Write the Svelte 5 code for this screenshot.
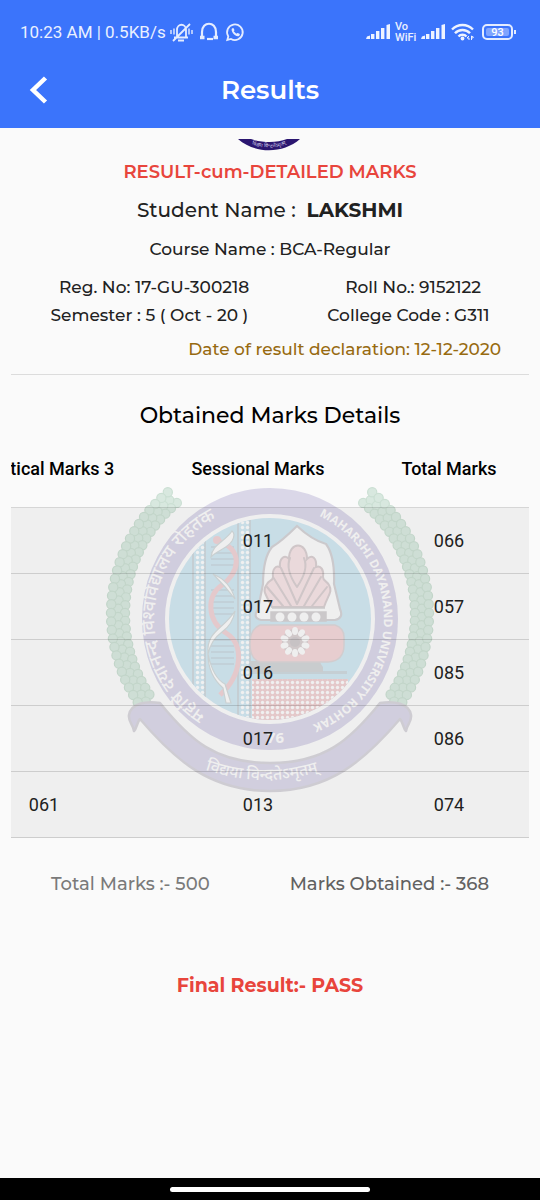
<script>
  const columns = ['Practical Marks 3', 'Sessional Marks', 'Total Marks'];
  const rows = [
    ['', '011', '066'],
    ['', '017', '057'],
    ['', '016', '085'],
    ['', '017', '086'],
    ['061', '013', '074'],
  ];

  const grains = [];
  for (let i = 0; i < 28; i++) {
    for (let k = 0; k < 3; k++) {
      const a = ((130 + i * 3.1 + (k % 2) * 1.5) * Math.PI) / 180;
      const r = 145 + k * 7;
      grains.push({ x: 270 + r * Math.cos(a), y: 614 - r * Math.sin(a) });
    }
  }
  const petals = Array.from({ length: 10 }, (_, i) => i * 36);
  const rungs = [547, 553, 559, 565, 590, 596, 602, 608, 614, 640, 646, 652, 658, 664];
</script>

<div class="page">
  <header>
    <div class="status">
      <span class="clock">10:23 AM | 0.5KB/s</span>
      <svg class="notices" viewBox="170 20 76 24" fill="none" stroke="#e4ecff" stroke-width="1.8" aria-hidden="true">
        <path d="M174 37.500h14M177 37v-7c0-7 9-7 9 0v7M173 41L190 24M178 40.500h6" />
        <path d="M171 30v4M174 28.500v6M189 28.500v6M192 30v4" stroke-width="1.400" />
        <path d="M202 37v-5c0-11 14-11 14 0v5" stroke-width="2.200" />
        <path d="M200 37.500h4.500M213.500 37.500h4.500" stroke-width="3.600" />
        <path d="M207 39h6" stroke-width="2.200" />
        <path d="M227.300 39.900l1-3.500a7.800 7.800 0 1 1 2.700 2.600z" />
        <path d="M232.200 28.200c-2.300 1.700 2.500 8.800 6.300 8 1.700-.5 1.800-2 .5-2.600l-1.700-.7-1 .9-2.600-2.600.8-1-.8-2z" fill="#e4ecff" stroke="none" />
      </svg>
      <svg class="signal" viewBox="0 0 25 16" fill="#eef3ff" aria-hidden="true">
        <path d="M1 12.500l3-1V15H0zM5 10h3.400v5H5zM10 7h3.400v8H10zM15 4h3.400v11H15zM20.500 1l3.500-1v15h-3.500z" />
      </svg>
      <span class="vo"><span>Vo</span><span>WiFi</span></span>
      <svg class="signal" viewBox="0 0 25 16" fill="#eef3ff" aria-hidden="true">
        <path d="M1 12.500l3-1V15H0zM5 10h3.400v5H5zM10 7h3.400v8H10zM15 4h3.400v11H15zM20.500 1l3.500-1v15h-3.500z" />
      </svg>
      <svg class="wifi" viewBox="0 0 24 18" fill="none" stroke="#eef3ff" stroke-width="2.400" aria-hidden="true">
        <path d="M1 6.500C7 .5 16 .5 22 6.500M4 10.300c4-4.500 11-4.500 15 0M7.500 13.500c2-2.300 6-2.300 8 0" />
        <circle cx="11.500" cy="15.500" r="1.900" fill="#eef3ff" stroke="none" />
        <path d="M18 13l-2 2h2v2M20.500 17v-4l2 1.300-2 1.200" stroke-width="1" />
      </svg>
      <span class="battery"><b>93</b></span>
    </div>
    <div class="appbar">
      <button aria-label="Back">
        <svg viewBox="0 0 20 30" fill="none" stroke="#fff" stroke-width="4.500" aria-hidden="true"><path d="M17.500 3L5 15l12.500 12" /></svg>
      </button>
      <h1>Results</h1>
    </div>
  </header>

  <main>
    <svg class="crest" viewBox="0 0 64 12" aria-hidden="true">
      <path d="M0 0C17 15 45 15 62 0H49C39 4 25 4 13 0z" fill="#2b1670" />
      <path id="crest-line" d="M9 3.500Q31 13.500 53 3.500" fill="none" />
      <text font-size="5" fill="#d4cfe8" text-anchor="middle"><textPath href="#crest-line" startOffset="50%">विद्यया विन्दतेऽमृतम्</textPath></text>
    </svg>
    <h2 class="doc">RESULT-cum-DETAILED MARKS</h2>
    <p class="student">Student Name : &nbsp;<b>LAKSHMI</b></p>
    <p class="course">Course Name : BCA-Regular</p>
    <div class="pair"><span>Reg. No: 17-GU-300218</span><span>Roll No.: 9152122</span></div>
    <div class="pair second"><span>Semester : 5 ( Oct - 20 )</span><span>College Code : G311</span></div>
    <p class="date">Date of result declaration: 12-12-2020</p>
    <hr />
    <h2 class="details">Obtained Marks Details</h2>

    <section>
      <svg class="emblem" viewBox="104 484 332 312" aria-hidden="true">
        <defs>
          <clipPath id="disc"><circle cx="270" cy="619" r="101" /></clipPath>
          <pattern id="dots" width="5" height="5" patternUnits="userSpaceOnUse"><circle cx="2.500" cy="2.500" r="1.700" fill="#fbfbfb" /></pattern>
          <path id="hindi" d="M206 714A113 113 0 0 1 242 509" />
          <path id="english" d="M319 516A114 114 0 0 1 306 727" />
          <path id="motto" d="M196 766Q270 796 344 762" />
          <g id="laurel">
            {#each grains as g}<circle cx={g.x} cy={g.y} r="4.600" />{/each}
          </g>
        </defs>
        <g fill="#d8e8df" stroke="#cbdfd3" stroke-width="1.200">
          <use href="#laurel" />
          <use href="#laurel" transform="matrix(-1 0 0 1 540 0)" />
        </g>
        <path d="M134 731c-1-7-6-9-5-16 2-12 17-14 31-12C190 740 215 763 270 763S350 740 380 703c14-2 29 0 31 12 1 7-4 9-5 16-3-3-3-9-6-12C365 760 330 791 270 791S175 760 140 719c-3 3-3 9-6 12z" fill="#dbd8e8" stroke="#d8d6dc" stroke-width="2.500" stroke-linejoin="round" />
        <ellipse cx="270" cy="619" rx="128" ry="131" fill="#dad7e8" />
        <circle cx="270" cy="619" r="105" fill="#fafafa" />
        <circle cx="270" cy="619" r="101" fill="#d2e7f1" />
        <g clip-path="url(#disc)">
          <path d="M193 510h12v220h-12zM238 510h12v220h-12z" fill="#d2e7f1" stroke="#ced8dd" stroke-width="2" />
          <path d="M195 510h10v220h-10zM240 510h10v220h-10z" fill="url(#dots)" />
          {#each rungs as y}<path d="M211 {y}h23" stroke="#c8d7de" stroke-width="1.500" />{/each}
          <path d="M216 540c30 10 22 34 6 45s-15 36 4 48 16 42-6 62" fill="none" stroke="#efd3d6" stroke-width="5" />
          <circle cx="217" cy="540" r="4" fill="#efd3d6" />
          <path d="M232 531q4 3 0 10c-5 8-15 9-21 16 1-13 14-15 21-26zM213 574q17 7 22 25-10-13-22-25zM235 611q-2 13-13 21t-14 22c-2-23 15-24 27-43zM208 654q5 24 17 30l6 19h-5l-3-15q-15-13-15-34z" fill="#fafafa" stroke="#d3dadb" stroke-width="1.200" />
          <path d="M250 671h97v3h-97z" fill="#ced9de" />
          <path d="M250 661h70q0 2 3 6v5h-73z" fill="#d3d6d8" />
          <path d="M252 679h96v50h-96z" fill="#efd1d3" />
          <path d="M252 679h96v50h-96z" fill="url(#dots)" />
        </g>
        <path d="M260 625h75q9 3 9 12v8q0 16-16 17h-68q-10-3-10-18t10-19z" fill="#f2d7d9" stroke="#dcd6d8" stroke-width="1.500" />
        <path d="M297 526Q282 541 272 547 263 558 263 584l-5 25q-6 9 3 11h74q9-2 5-11l-6-25q1-28-8-40-14-4-29-18z" fill="#fafafa" stroke="#d5d3d6" stroke-width="2.200" />
        <g fill="#f5e3e5" stroke="#d9cfd1" stroke-width="2" stroke-linecap="round">
          <path d="M272 607c-7-14-10-16-5-23 2-4 6-3 6-7-1-8 3-12 7-10-1-9 5-13 9-8 0-18 18-18 18 0 5-5 10-1 9 8 5-2 8 3 7 10 0 4 4 4 6 8 4 7-1 10-5 22z" />
          <path d="M297 587c-9-13-10-22-7-29M297 587c9-13 10-22 7-29M291 606l-18-29M304 606l17-29M283 606l-16-19M312 606l15-19M297 604l-16-36M297 604l17-36" fill="none" />
        </g>
        <path d="M272 608h53M271 612h55v9h-55z" fill="#d5d2d4" stroke="#d5d2d4" stroke-width="1.500" />
        <g fill="#fafafa"><circle cx="280" cy="617" r="4.500" /><circle cx="292" cy="617" r="4.500" /><circle cx="304" cy="617" r="4.500" /><circle cx="316" cy="617" r="4.500" /></g>
        <g transform="translate(295 642)">
          <circle r="13" fill="#dad1d3" /><circle r="5" fill="#d0cbcd" />
          {#each petals as p}<ellipse cx="0" cy="-11" rx="3" ry="4" fill="#fafafa" transform="rotate({p})" />{/each}
        </g>
        <g fill="#fafafa" class="ring">
          <text font-size="18"><textPath href="#hindi">महर्षि दयानन्द विश्वविद्यालय रोहतक</textPath></text>
          <text font-size="12" font-weight="700"><textPath href="#english">MAHARSHI DAYANAND UNIVERSITY ROHTAK</textPath></text>
          <text x="284" y="743" font-size="15" font-weight="700" text-anchor="end">76</text>
          <text font-size="16"><textPath href="#motto" startOffset="10">विद्यया विन्दतेऽमृतम्</textPath></text>
        </g>
      </svg>
      <table>
        <thead>
          <tr>{#each columns as c}<th scope="col">{c}</th>{/each}</tr>
        </thead>
        <tbody>
          {#each rows as row}
            <tr>{#each row as cell}<td>{cell}</td>{/each}</tr>
          {/each}
        </tbody>
      </table>
    </section>

    <div class="pair totals"><span>Total Marks :- 500</span><span class="got">Marks Obtained :- 368</span></div>
    <p class="final">Final Result:- PASS</p>
  </main>
  <footer><i></i></footer>
</div>

<style>
  :global(body) { margin: 0; background: #fafafa; }
  .page { min-height: 100vh; display: flex; flex-direction: column; background: #fafafa; color: #212121; font-family: Montserrat, Inter, sans-serif; }
  h1, h2, p { margin: 0; font-weight: 500; }
  svg { display: block; flex: none; }
  header { background: #3b74fb; color: #fff; }
  .status { display: flex; align-items: center; height: 52px; padding: 12px 27px 0 20px; box-sizing: border-box; font-family: Roboto, sans-serif; color: #eaf0ff; }
  .clock { font-size: 17px; white-space: nowrap; }
  .notices { width: 76px; height: 24px; margin: 0 auto 0 4px; }
  .signal { width: 25px; height: 16px; }
  .vo { display: flex; flex-direction: column; font-size: 11px; line-height: 11px; font-weight: 500; width: 22px; margin: 0 4px; }
  .wifi { width: 24px; height: 18px; margin: 0 7px 0 5px; }
  .battery { position: relative; box-sizing: border-box; width: 31px; height: 16px; padding: 2px; border: 2px solid #e4ecff; border-radius: 5px; display: flex; }
  .battery b { flex: 1; background: #7fa4ff; border-radius: 2px; font-size: 11px; line-height: 9px; text-align: center; color: #fff; font-weight: 500; }
  .battery::after { content: ''; position: absolute; right: -5px; top: 4px; width: 2px; height: 4px; background: #e4ecff; }
  .appbar { display: grid; grid-template-columns: 60px 1fr 60px; align-items: center; height: 76px; }
  button { border: 0; background: none; padding: 0 0 0 28px; height: 48px; }
  button svg { width: 20px; height: 30px; }
  h1 { text-align: center; font-size: 26px; line-height: 32px; font-weight: 600; }
  main { flex: 1; padding: 11px 11px 0; }
  .crest { width: 64px; height: 12px; margin: 0 auto; }
  main h2, main p { text-align: center; }
  .doc { margin-top: 9px; font-size: 18px; line-height: 24px; font-weight: 600; color: #e8453c; }
  .student { margin-top: 12px; font-size: 20px; line-height: 28px; }
  .course { margin-top: 13px; font-size: 17px; line-height: 24px; }
  .pair { display: flex; justify-content: space-around; margin-top: 14px; font-size: 17px; line-height: 24px; font-weight: 500; }
  .second { margin-top: 4px; }
  main .date { margin-top: 10px; padding-right: 28px; text-align: right; font-size: 17px; line-height: 24px; color: #976a10; }
  hr { margin: 13px 0 0; border: 0; border-top: 1px solid #dcdcdc; }
  .details { margin-top: 27px; font-size: 22px; line-height: 28px; color: #000; }
  section { position: relative; overflow: hidden; }
  .emblem { position: absolute; top: 54px; left: 50%; width: 332px; height: 312px; transform: translateX(-50%); }
  .ring { font-family: "Noto Sans", sans-serif; font-weight: 500; }
  table { position: relative; width: calc(100% + 82px); margin-left: -76px; table-layout: fixed; border-collapse: collapse; font-family: Roboto, sans-serif; }
  th { height: 77px; padding: 0; border-bottom: 1px solid #00000024; font-size: 18px; font-weight: 500; color: #000; width: 35%; }
  th:first-child { width: 36.33%; }
  th:last-child { width: 28.67%; }
  td { height: 65px; padding: 0; border-bottom: 1px solid #00000024; text-align: center; font-size: 18px; background: #0000000b; }
  .totals { margin-top: 34px; font-size: 18px; color: #7a7a7a; }
  .got { color: #616161; }
  .final { margin-top: 78px; font-size: 19px; line-height: 24px; font-weight: 700; color: #e8453c; }
  footer { height: 22px; background: #000; display: flex; justify-content: center; align-items: center; }
  footer i { width: 37%; height: 5px; border-radius: 3px; background: #fff; }
</style>
